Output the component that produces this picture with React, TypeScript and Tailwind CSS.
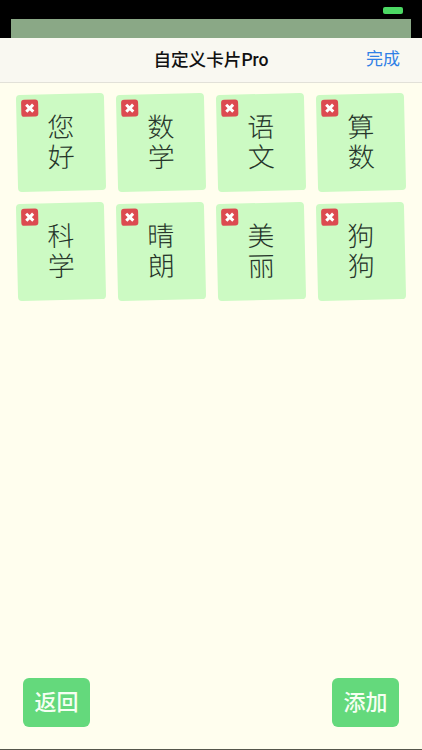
const cards = ['您好', '数学', '语文', '算数', '科学', '晴朗', '美丽', '狗狗'];

const Card = ({ word }: { word: string }) => (
  <div className="relative w-[88px] h-[97px] mx-auto -rotate-[1.3deg] rounded-[4px] bg-[#ccfac3] flex flex-col items-center pt-[19px] text-[27px] leading-[30px] font-light text-[#26352a]">
    <span>{word[0]}</span>
    <span>{word[1]}</span>
    <div className="absolute left-[5px] top-[5px] w-[17px] h-[17px] rounded-[3px] bg-[#dc4a50] flex items-center justify-center">
      <svg width="13" height="13" viewBox="0 0 13 13">
        <path d="M3 3L10 10M10 3L3 10" stroke="#ffffff" strokeWidth="3" strokeLinecap="butt" />
      </svg>
    </div>
  </div>
);

export default function App() {
  return (
    <div className="w-[422px] h-[750px] flex flex-col bg-[#fffeee] font-['Roboto','Noto_Sans_CJK_SC',sans-serif] overflow-hidden">
      <div className="relative h-[38px] bg-black shrink-0 flex items-end px-[11px]">
        <div className="h-[19px] w-full bg-[#8aa886]" />
        <div className="absolute right-[19px] top-[7px] w-[20px] h-[7px] rounded-[2px] bg-[#4cd964]" />
      </div>

      <div className="relative h-[45px] shrink-0 bg-[#f9f8f1] border-b border-[#e2e1d8] flex items-center justify-center">
        <span className="text-[17.6px] font-medium text-[#111111]">自定义卡片Pro</span>
        <span className="absolute right-[22px] text-[17px] text-[#2f80e6]">完成</span>
      </div>

      <div className="grid grid-cols-4 gap-y-[12px] px-[11px] pt-[11px]">
        {cards.map(c => <Card key={c} word={c} />)}
      </div>

      <div className="mt-auto flex justify-between px-[23px] pb-[22px]">
        <button className="w-[67px] h-[49px] rounded-[6px] bg-[#64d97c] text-[#f6fff2] text-[22px] font-medium">返回</button>
        <button className="w-[67px] h-[49px] rounded-[6px] bg-[#64d97c] text-[#f6fff2] text-[22px] font-medium">添加</button>
      </div>
      <div className="h-px shrink-0 bg-[#55564a]" />
    </div>
  );
}
